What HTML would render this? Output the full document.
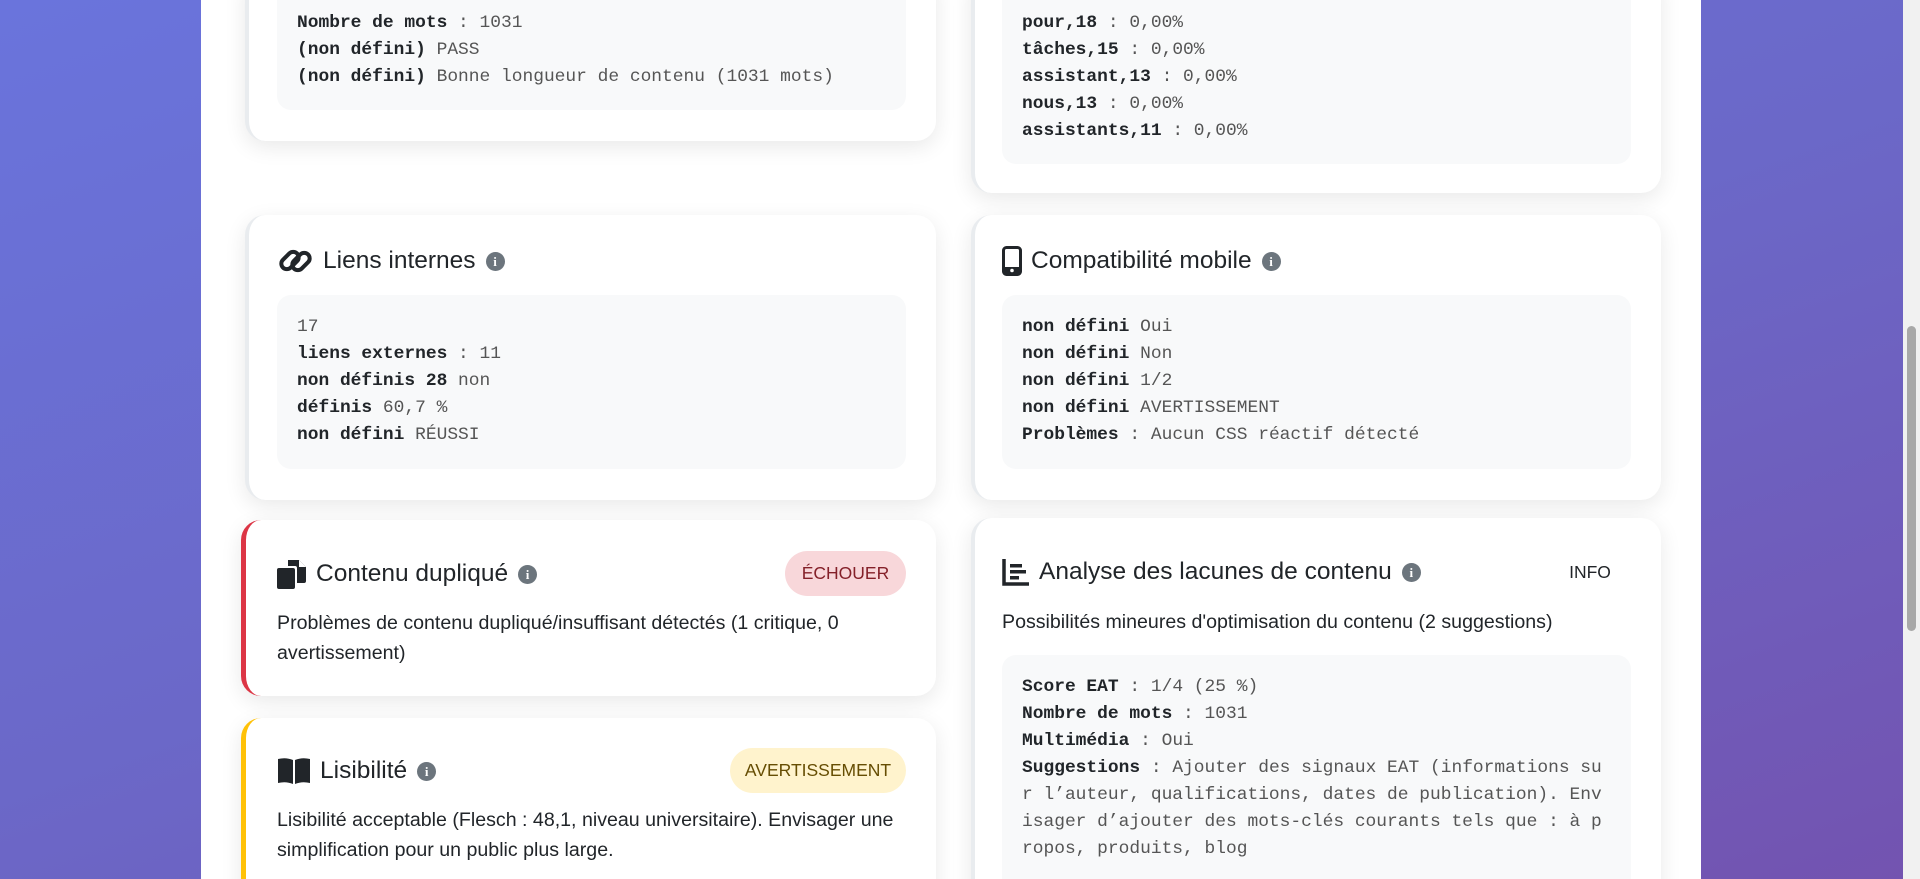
<!DOCTYPE html>
<html><head><meta charset="utf-8"><style>
*{box-sizing:border-box;margin:0;padding:0}
html,body{width:1920px;height:879px;overflow:hidden}
body{background:linear-gradient(160deg,#6a74dc 0%,#6b68c8 50%,#7353b0 100%);font-family:"Liberation Sans",sans-serif;color:#212529}
#root{position:relative;width:1920px;height:879px;overflow:hidden}
.wrap{position:absolute;left:201px;top:0;width:1500px;height:879px;background:#fff}
.card{position:absolute;background:#fff;border-radius:20px;box-shadow:0 6px 22px rgba(0,0,0,.09);border-left:4px solid #e9ecef}
.code{position:absolute;background:#f8f9fa;border-radius:14px;font-family:"Liberation Mono",monospace;font-size:17.9px;line-height:27px;color:#555;padding:19px 20px;white-space:pre-wrap;word-break:break-all}
.code b{color:#212529}
.title{position:absolute;display:flex;align-items:center;font-size:24.5px;color:#212529;height:30px}
.title svg{margin-right:9px}
.info{display:inline-block;width:19px;height:19px;border-radius:50%;background:#6c757d;color:#fff;font-size:13px;font-weight:bold;text-align:center;line-height:19px;margin-left:10px;font-family:"Liberation Serif",serif}
.txt{position:absolute;font-size:19.6px;line-height:30px;color:#212529}
.badge{position:absolute;border-radius:23px;font-size:17.5px;text-align:center;font-weight:500}
.sb{position:absolute;left:1903px;top:0;width:17px;height:879px;background:#f1f1f1}
</style></head><body><div id="root">
<div class="wrap"></div>

<div class="card" style="left:245px;top:-30px;width:691px;height:171px"></div>
<div class="code" style="left:277px;top:-20px;width:629px;height:130px;padding-top:30px"><b>Nombre de mots</b> : 1031
<b>(non défini)</b> PASS
<b>(non défini)</b> Bonne longueur de contenu (1031 mots)</div>

<div class="card" style="left:971px;top:-30px;width:690px;height:223px"></div>
<div class="code" style="left:1002px;top:-20px;width:629px;height:184px;padding-top:30px"><b>pour,18</b> : 0,00%
<b>tâches,15</b> : 0,00%
<b>assistant,13</b> : 0,00%
<b>nous,13</b> : 0,00%
<b>assistants,11</b> : 0,00%</div>

<div class="card" style="left:245px;top:215px;width:691px;height:285px"></div>
<div class="title" style="left:277px;top:246px">
<svg width="37" height="30" viewBox="0 0 37 30"><g fill="none" stroke="#212529" stroke-width="4"><rect x="3" y="9" width="20" height="11" rx="5.5" transform="rotate(-45 13 14.5)"/><rect x="14" y="10" width="20" height="11" rx="5.5" transform="rotate(-45 24 15.5)"/></g></svg>Liens internes<span class="info">i</span></div>
<div class="code" style="left:277px;top:295px;width:629px;height:174px">17
<b>liens externes</b> : 11
<b>non définis 28</b> non
<b>définis</b> 60,7 %
<b>non défini</b> RÉUSSI</div>

<div class="card" style="left:971px;top:215px;width:690px;height:285px"></div>
<div class="title" style="left:1002px;top:246px">
<svg width="20" height="30" viewBox="0 0 20 30"><rect x="1.5" y="1.5" width="17" height="27" rx="3" fill="none" stroke="#212529" stroke-width="3"/><rect x="1.5" y="21" width="17" height="7" fill="#212529"/><circle cx="10" cy="24.5" r="1.8" fill="#fff"/></svg>Compatibilité mobile<span class="info">i</span></div>
<div class="code" style="left:1002px;top:295px;width:629px;height:174px"><b>non défini</b> Oui
<b>non défini</b> Non
<b>non défini</b> 1/2
<b>non défini</b> AVERTISSEMENT
<b>Problèmes</b> : Aucun CSS réactif détecté</div>

<div class="card" style="left:241px;top:520px;width:695px;height:176px;border-left:5px solid #dc3545"></div>
<div class="title" style="left:277px;top:559px">
<svg width="30" height="30" viewBox="0 0 30 30"><rect x="0" y="9" width="18" height="21" rx="2" fill="#212529"/><path d="M11 1 H22 L29 8 V22 Q29 24 27 24 H20 V9 Q20 7 18 7 H11 Z" fill="#212529"/><path d="M22 1 V8 H29" fill="#fff"/></svg>Contenu dupliqué<span class="info">i</span></div>
<div class="badge" style="left:785px;top:551px;width:121px;height:45px;line-height:45px;background:#f8d7da;color:#842029">ÉCHOUER</div>
<div class="txt" style="left:277px;top:608px;width:620px">Problèmes de contenu dupliqué/insuffisant détectés (1 critique, 0 avertissement)</div>

<div class="card" style="left:241px;top:718px;width:695px;height:220px;border-left:5px solid #ffc107"></div>
<div class="title" style="left:277px;top:756px">
<svg width="34" height="28" viewBox="0 0 34 28"><path d="M1 2 Q9 0 16 3 V27 Q9 24 1 26 Z" fill="#212529"/><path d="M33 2 Q25 0 18 3 V27 Q25 24 33 26 Z" fill="#212529"/></svg>Lisibilité<span class="info">i</span></div>
<div class="badge" style="left:730px;top:748px;width:176px;height:45px;line-height:45px;background:#fff3cd;color:#664d03">AVERTISSEMENT</div>
<div class="txt" style="left:277px;top:805px;width:640px">Lisibilité acceptable (Flesch : 48,1, niveau universitaire). Envisager une simplification pour un public plus large.</div>

<div class="card" style="left:971px;top:518px;width:690px;height:420px"></div>
<div class="title" style="left:1002px;top:557px">
<svg width="28" height="28" viewBox="0 0 28 28"><path d="M2 1 V26 H27" fill="none" stroke="#212529" stroke-width="3.5"/><rect x="8" y="6" width="12" height="3.5" fill="#212529"/><rect x="8" y="12" width="16" height="3.5" fill="#212529"/><rect x="8" y="18" width="9" height="3.5" fill="#212529"/></svg>Analyse des lacunes de contenu<span class="info">i</span></div>
<div class="badge" style="left:1560px;top:550px;width:60px;height:45px;line-height:45px;color:#212529">INFO</div>
<div class="txt" style="left:1002px;top:607px;width:640px">Possibilités mineures d'optimisation du contenu (2 suggestions)</div>
<div class="code" style="left:1002px;top:655px;width:629px;height:260px"><b>Score EAT</b> : 1/4 (25 %)
<b>Nombre de mots</b> : 1031
<b>Multimédia</b> : Oui
<b>Suggestions</b> : Ajouter des signaux EAT (informations sur l’auteur, qualifications, dates de publication). Envisager d’ajouter des mots-clés courants tels que : à propos, produits, blog</div>

<div class="sb"><div style="position:absolute;left:4px;top:326px;width:9px;height:305px;background:#a8a8a8;border-radius:5px"></div></div>
</div></body></html>
